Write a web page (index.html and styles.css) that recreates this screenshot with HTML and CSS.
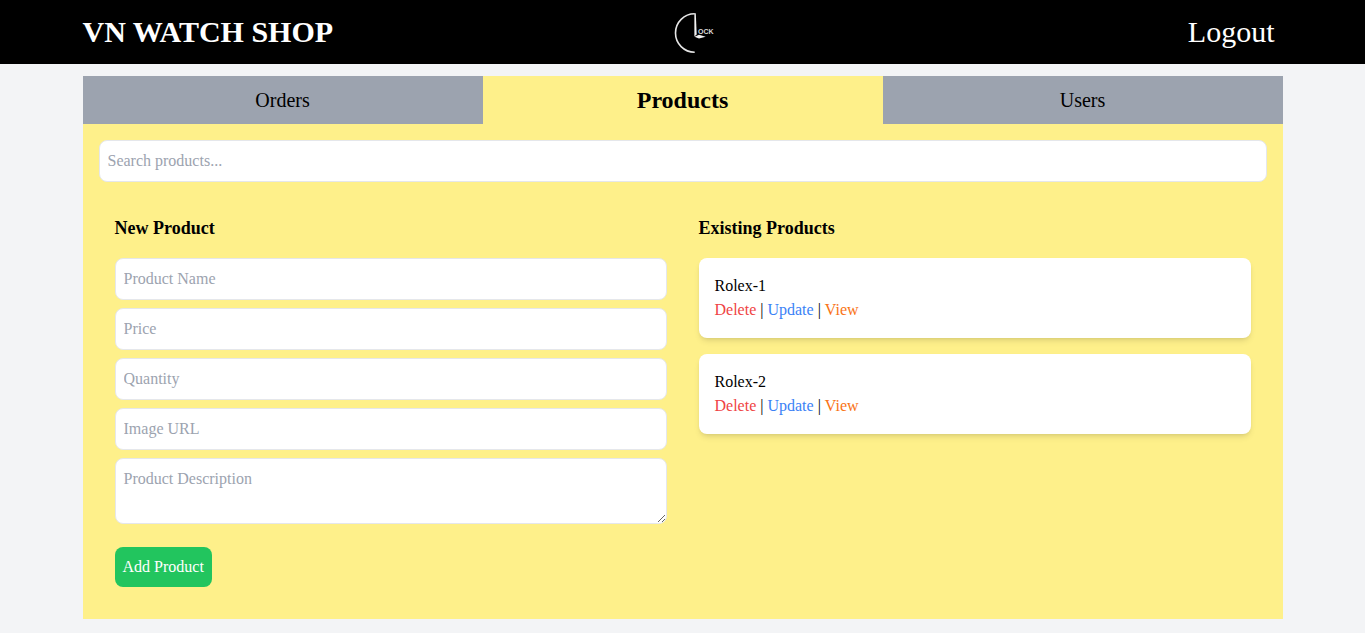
FILE: index.html
```html
<!DOCTYPE html>
<html lang="en">
<head>
<meta charset="utf-8">
<meta name="viewport" content="width=device-width, initial-scale=1">
<title>VN Watch Shop</title>
<link rel="stylesheet" href="styles.css">
</head>
<body>
<header class="header">
  <div class="container header-inner">
    <h1 class="brand">VN WATCH SHOP</h1>
    <svg class="logo" viewBox="0 0 64 64" role="img" aria-label="Clock">
      <path d="M43.7 13.8A19.2 19.2 0 0 0 43.7 52.2" fill="none" stroke="#e6e6e6" stroke-width="1.6"/>
      <path d="M43.4 13.2L44.8 13.2L45.7 34.6L43.4 36.6Z" fill="#f2f2f2"/>
      <path d="M43.5 36.7L48 34.8L54.7 36.7L48 38.4Z" fill="#f2f2f2"/>
      <text class="logo-text" x="47" y="34">OCK</text>
    </svg>
    <div class="account"><button class="logout" type="button">Logout</button></div>
  </div>
</header>
<main class="container main">
  <nav class="tabs">
    <button class="tab" type="button">Orders</button>
    <button class="tab tab-active" type="button">Products</button>
    <button class="tab" type="button">Users</button>
  </nav>
  <div class="panel">
    <input class="field" type="text" placeholder="Search products..." aria-label="Search products">
    <div class="columns">
      <section class="column">
        <h2 class="heading">New Product</h2>
        <form class="form">
          <input class="field" type="text" placeholder="Product Name" aria-label="Product Name">
          <input class="field" type="text" placeholder="Price" aria-label="Price">
          <input class="field" type="text" placeholder="Quantity" aria-label="Quantity">
          <input class="field" type="text" placeholder="Image URL" aria-label="Image URL">
          <textarea class="field" rows="2" placeholder="Product Description" aria-label="Product Description"></textarea>
          <button class="submit" type="button">Add Product</button>
        </form>
      </section>
      <section class="column">
        <h2 class="heading">Existing Products</h2>
        <ul class="products">
          <li class="card">
            <p class="name">Rolex-1</p>
            <button class="action delete" type="button">Delete</button> | <button class="action update" type="button">Update</button> | <button class="action view" type="button">View</button>
          </li>
          <li class="card">
            <p class="name">Rolex-2</p>
            <button class="action delete" type="button">Delete</button> | <button class="action update" type="button">Update</button> | <button class="action view" type="button">View</button>
          </li>
        </ul>
      </section>
    </div>
  </div>
</main>
</body>
</html>
```

FILE: styles.css
```css
*, *::before, *::after { box-sizing: border-box; }

body {
  margin: 0;
  background: #f3f4f6;
  color: #000;
  font-family: "Liberation Serif", "Times New Roman", serif;
  font-size: 16px;
  line-height: 24px;
}

h1, h2, p, ul { margin: 0; padding: 0; }

button, input, textarea {
  margin: 0;
  font: inherit;
  color: inherit;
}

button {
  padding: 0;
  border: 0;
  background: transparent;
  cursor: pointer;
}

.container {
  width: 100%;
  max-width: 1200px;
  margin: 0 auto;
}

.header {
  background: #000;
  color: #fff;
}

.header-inner {
  display: grid;
  grid-template-columns: 1fr auto 1fr;
  align-items: center;
}

.brand {
  font-size: 30px;
  line-height: 36px;
}

.logo {
  display: block;
  width: 64px;
  height: 64px;
}

.logo-text {
  fill: #d9d9d9;
  font-family: "Liberation Sans", Arial, sans-serif;
  font-size: 7px;
  font-weight: 700;
}

.account {
  padding-right: 8px;
  text-align: right;
}

.logout {
  font-size: 30px;
  line-height: 36px;
}

.main { padding: 12px 0; }

.tabs {
  display: grid;
  grid-template-columns: repeat(3, 1fr);
}

.tab {
  height: 48px;
  background: #9ca3af;
  font-size: 20px;
  line-height: 28px;
}

.tab-active {
  background: #fef08a;
  font-size: 24px;
  font-weight: 700;
}

.panel {
  padding: 16px;
  background: #fef08a;
}

.field {
  display: block;
  width: 100%;
  padding: 8px;
  border: 1px solid #e5e7eb;
  border-radius: 8px;
  background: #fff;
}

.field::placeholder {
  color: #9ca3af;
  opacity: 1;
}

.columns {
  display: grid;
  grid-template-columns: 1fr 1fr;
  padding-top: 16px;
}

.column { padding: 16px; }

.heading {
  margin-bottom: 16px;
  font-size: 18px;
  line-height: 28px;
}

.form {
  display: grid;
  gap: 8px;
}

.submit {
  justify-self: start;
  margin-top: 15px;
  padding: 8px;
  border-radius: 8px;
  background: #22c55e;
  color: #fff;
}

.products {
  display: grid;
  gap: 16px;
  list-style: none;
}

.card {
  padding: 16px;
  border-radius: 8px;
  background: #fff;
  box-shadow: 0 4px 6px -1px rgb(0 0 0 / 10%), 0 2px 4px -2px rgb(0 0 0 / 10%);
}

.delete { color: #ef4444; }
.update { color: #3b82f6; }
.view { color: #f97316; }
```
